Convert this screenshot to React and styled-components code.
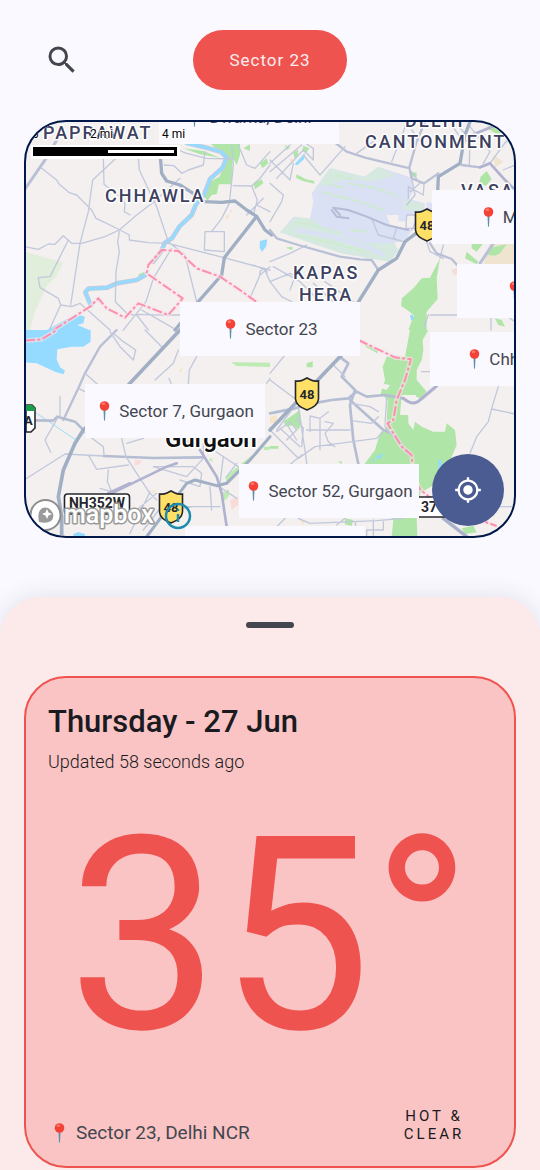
import React from "react";
import styled, { createGlobalStyle } from "styled-components";

const color = {
  page: "#faf9ff",
  ink: "#1a1b21",
  muted: "#44464f",
  red: "#ef5350",
  card: "#fac4c4",
  sheet: "#fce9e9",
  navy: "#001849",
  indigo: "#4a5c92",
};

const GlobalStyle = createGlobalStyle`
  *, *::before, *::after { box-sizing: border-box; }
  body { margin: 0; background: ${color.page}; font-family: Roboto, "Liberation Sans", sans-serif; color: ${color.ink}; }
  button { font: inherit; border: 0; cursor: pointer; }
`;

const Screen = styled.main`
  display: flex;
  flex-direction: column;
`;

const Header = styled.header`
  display: grid;
  grid-template-columns: 1fr auto 1fr;
  align-items: center;
  padding: 30px 44px;
`;

const IconButton = styled.button`
  display: flex;
  justify-self: start;
  padding: 0;
  background: none;
  color: ${color.muted};
`;

const PlaceChip = styled.button`
  height: 60px;
  padding: 0 36px;
  border-radius: 30px;
  background: ${color.red};
  color: #fdeeee;
  font-size: 17px;
  letter-spacing: 1px;
`;

const MapFrame = styled.section`
  position: relative;
  height: 418px;
  margin: 0 24px;
  border: 2px solid ${color.navy};
  border-radius: 42px;
  overflow: hidden;
  background: #f3f0ef;
`;

const MapDrawing = styled.svg`
  display: block;
  width: 100%;
  height: 100%;
  font-family: Roboto, "Liberation Sans", sans-serif;
`;

const PlacePin = styled.button`
  position: absolute;
  left: ${(p) => p.$x}px;
  top: ${(p) => p.$y}px;
  display: flex;
  align-items: center;
  justify-content: center;
  gap: 8px;
  width: 180px;
  height: 54px;
  padding: 0 0 0 2px;
  background: ${color.page};
  color: ${color.muted};
  font-size: 17px;
  white-space: nowrap;
`;

const PinName = styled.span`
  min-width: 60px;
  text-align: left;
`;

const MapOverlay = styled(MapDrawing)`
  position: absolute;
  inset: 0;
  pointer-events: none;
`;

const LocateButton = styled.button`
  position: absolute;
  right: 10px;
  bottom: 10px;
  display: flex;
  align-items: center;
  justify-content: center;
  width: 72px;
  height: 72px;
  border-radius: 50%;
  background: ${color.indigo};
  color: #fff;
`;

const Sheet = styled.section`
  display: flex;
  flex-direction: column;
  align-items: stretch;
  margin-top: 59px;
  padding: 25px 24px 2px;
  border-radius: 40px 40px 0 0;
  background: ${color.sheet};
  box-shadow: 0 0 24px rgba(40, 50, 90, 0.12);
`;

const Handle = styled.div`
  align-self: center;
  width: 48px;
  height: 6px;
  margin-bottom: 48px;
  border-radius: 3px;
  background: ${color.muted};
`;

const WeatherCard = styled.article`
  display: flex;
  flex-direction: column;
  min-height: 492px;
  padding: 24px 22px;
  border: 2px solid ${color.red};
  border-radius: 42px;
  background: ${color.card};
`;

const DateTitle = styled.h1`
  margin: 0;
  font-size: 31px;
  line-height: 40px;
  font-weight: 500;
`;

const Updated = styled.p`
  margin: 8px 0 0;
  font-size: 18px;
  line-height: 24px;
  font-weight: 300;
`;

const Temperature = styled.p`
  margin: 16px 0 0;
  font-size: 270px;
  line-height: 292px;
  text-align: center;
  color: ${color.red};
`;

const CardFooter = styled.footer`
  display: flex;
  justify-content: space-between;
  align-items: flex-end;
  margin: auto 0 -1px;
`;

const Location = styled.p`
  display: flex;
  align-items: center;
  gap: 10px;
  margin: 0;
  padding-left: 5px;
  font-size: 19px;
  line-height: 20px;
  color: ${color.muted};
`;

const Condition = styled.p`
  width: 116px;
  margin: 0;
  font-size: 15px;
  line-height: 18px;
  letter-spacing: 3px;
  text-align: center;
  text-transform: uppercase;
`;

function Pushpin() {
  return (
    <svg width="13" height="20" viewBox="0 0 13 20" aria-hidden="true">
      <path d="M5.5 9h2L7 19.2l-.5.8-.5-.8z" fill="#5f8fa8" />
      <circle cx="6.5" cy="5" r="4.8" fill="#f44336" />
      <ellipse cx="5.4" cy="2.8" rx="1.8" ry="1.2" fill="#ff7d6b" />
    </svg>
  );
}

const Lines = ({ d, w = 4, c = "#c2c8dc" }) => (
  <path d={d} fill="none" stroke={c} strokeWidth={w} strokeLinejoin="round" strokeLinecap="round" />
);
const Border = ({ d }) => (
  <>
    <path d={d} fill="none" stroke="#fbe4ea" strokeOpacity=".6" strokeWidth="14" strokeLinejoin="round" />
    <path d={d} fill="none" stroke="#fb8fae" strokeWidth="6" strokeDasharray="30 7 9 7" strokeLinejoin="round" />
  </>
);
const MAJOR = "#a1afc5";
const PURPLE = "#b0b2cf";
const PARK = "#b0e5a8";
const WATER = "#94dbff";

function NorthWest() {
  return (
    <g transform="translate(20 115) scale(0.33333)">
      <path d="M15 410L130 443 108 485 80 512 45 590 30 645H15z" fill="#e0eedb" />
      <path d="M570 85H660V120L650 150 638 128 635 208H597L590 238 575 240 562 258 553 242 570 200 598 185 622 130zM355 478l20-8v18l-18 2zM720 145l20-15 5 15-18 15zM700 205l25-12 5 12-25 18zM670 100l20-12v20zM490 100l60 8 50 20-60-10z" fill={PARK} />
      <path d="M80 645L140 612 180 600 195 605 190 625 172 630 208 645zM720 378l22-5-3 20-13 18-7-13z" fill={WATER} />
      <Lines d="M500 84L560 98 602 110 620 128 608 158 570 192 552 240 528 268 515 300 478 335 456 370 435 383 424 408 400 440M376 480L350 495 290 505 262 518 205 521 196 532 213 572" w={14} c="#c3cadc" />
      <Lines d="M500 84L560 98 602 110 620 128 608 158 570 192 552 240 528 268 515 300 478 335 456 370 435 383 424 408M376 480L350 495 290 505 262 518 205 521 196 532 213 572" w={9} c={WATER} />
      <Lines d="M15 222L82 125 130 40" w={9} c="#b9c0d6" />
      <Lines d="M65 160L110 195 118 208 148 233 170 240 215 285 228 310 260 325 300 345 328 360V375L385 383 445 385M15 395L55 403 85 387 105 388 130 362 155 385 185 385 255 365 298 345 350 300 405 258 480 190M320 100L218 195 205 290 180 385 152 570M250 130L252 208 300 245 315 265 313 290 330 300M145 375L90 485 55 488 60 518 115 550 122 570 155 575 180 565 270 645M122 570L90 640M298 350L293 380 298 410 288 470 286 560 320 595 340 600M355 130L358 165 410 275 445 380 495 420 530 560M445 385L600 425 750 465M555 350H613V410L553 405zM575 350L605 310 628 265 640 150 635 90M455 400L400 490 378 560 330 620 310 645M350 600L385 645M365 585L430 622 470 645M345 598L430 600H480M432 150L462 152 485 175 505 165 550 150 555 110M460 100L500 115 560 130 640 132M655 90L680 150 705 160 750 110M640 212L695 213 720 190 750 150M695 213L712 255 700 300M710 270L750 290M680 300L730 250M690 550L720 480 750 455M700 450L735 465 750 500M720 480C715 460 745 455 740 478" />
      <Lines d="M420 110L425 175 440 198 480 210 515 232 552 260 605 262 645 258 680 285 710 304 735 345 755 360M710 304L613 428 605 480 535 560 465 645" w={10} c={MAJOR} />
      <path d="M618 302l8-5v10l-8 8zM630 285h8l-5 8z" fill="#f4e2c4" />
      <Border d="M100 645L210 575 235 550 260 580 315 608 355 565 445 600 488 550 380 475 385 450 425 405 475 408 530 460 600 485 660 525 750 590" />
    </g>
  );
}

function NorthEast() {
  return (
    <g transform="translate(270 115) scale(0.33333)">
      <path d="M660 385H750V450H640zM640 40l90-20v60zM670 120l30 20-25 18z" fill="#efe4d0" />
      <path d="M180 160L285 185 325 155 425 188 430 225 418 252 465 265 462 290 412 300 405 320 385 318V300H350L360 330 425 345 410 370 372 385 385 405 360 440 300 430 215 415 170 400 30 352 70 305 120 312 130 260 125 235 150 200z" fill="#dae1f5" />
      <path d="M180 160L285 185 325 155 375 180 350 190 300 200 245 192 160 210 140 230 150 200zM75 305L130 312 165 345 290 385 370 385 385 405 360 440 300 430 215 415 170 400 30 352zM405 252l58 15-5 22-60-5z" fill="#d6e9e1" />
      <path d="M80 345L190 365 290 395 340 420M180 225L390 275" fill="none" stroke="#dae1f5" strokeWidth="14" />
      <path d="M170 205L225 220M160 232L225 250M235 205L320 220 385 245M210 245L275 262 340 285M195 180L260 195M75 322L130 330 215 355M80 360L190 385 290 412M240 345L290 350" fill="none" stroke="#cdebcd" strokeWidth="6" strokeDasharray="24 6" />
      <path d="M510 430L500 490 503 552 470 590V645H415L432 600 393 572 396 550 430 520 455 490 480 488zM80 178l28 15 25 5v8l-35-8-20-10zM45 90l15 8-10 8zM70 112l15-7-2 20-10 5zM100 92l18 8-10 15-12-8zM650 168l15 25-18 20-20-10 5-18zM420 170l20 3v12h-18zM655 400L710 388 690 415 675 422 655 420zM605 385h35l-20 25-15-10zM590 410l35 30-5 8-35-18zM675 610l20 5 10 20-20-5zM650 35l30-10 20 20-10 20-20-15zM47 398l20-3v10z" fill={PARK} />
      <path d="M90 130l15-15-3 18-20 18-8-3zM420 602l8-5 4 15-8 5z" fill={WATER} />
      <path d="M545 465l20-8 5 15-18 10zM60 130l12 5-8 10z" fill="#f8dcd9" />
      <path d="M470 260l18 5v80h-18z" fill="#dcdff5" />
      <Lines d="M185 75L230 110 285 128 410 158 418 158M465 20L440 80 418 158 425 190 462 205 505 175M575 150L630 157 660 145" w={7} c="#b9c0d6" />
      <Lines d="M0 145L60 90M0 170L95 90M20 190L100 105 130 135V100L110 87M100 120L150 180 225 95M365 140L400 50 410 20M260 115L310 80M0 205L40 240 35 260 0 320M0 135L60 195 70 145M462 205L460 240 415 215V250M425 190L435 240 410 270M440 315L425 345M380 340L370 370 400 380M420 165L450 205 420 230M410 300H437V340H408zM425 45L455 85M570 40L600 70 598 150M545 30L580 80 630 65M600 35L660 110 640 145M660 145L700 90 735 50M700 165L735 150M0 500L60 475 75 485 60 525M0 500L35 545 65 560M10 455L90 500 150 560M130 505L190 560M0 440L60 415 110 390M480 600H580M663 605V645M470 380L480 410 520 430M460 640L475 600M510 430L520 390M305 310L325 360 400 380M165 500L250 560M720 610L750 630" />
      <Lines d="M190 278L235 285 290 305 350 330 415 345M185 285L200 305 235 310M190 278L210 300" w={6} c="#b6bad5" />
      <Lines d="M0 345L20 370 85 390 210 425 270 433 305 435 325 465" w={7} c="#b9c0d6" />
      <Lines d="M630 445L670 385" w={9} c="#b9c0d8" />
      <Lines d="M480 385L500 415 545 432 570 460" w={7} c="#b9c0d6" />
      <Lines d="M250 585L325 465 380 430 405 380 445 350 500 300 505 185 570 145 585 60 600 20" w={10} c={MAJOR} />
      <Lines d="M605 60L680 30M630 157L660 145 705 195 730 220" w={8} c={PURPLE} />
    </g>
  );
}

function SouthWest() {
  return (
    <g transform="translate(20 330) scale(0.33333)">
      <path d="M15 0H212V35L190 50 155 50 112 58 110 88 120 112 135 122 130 133 105 125 50 100 15 97zM160 612l15-6 20 6v10h-35z" fill={WATER} />
      <path d="M632 97L750 98V111L650 108zM730 350h20v10h-18zM605 490l22-12v20l-20 20zM615 440L690 380 710 365 680 400 620 455zM565 388l12-3v12z" fill="#bdebb3" />
      <path d="M345 390h20l-5 12-18 5zM630 510l25-10v25l-20 15z" fill="#f8dcd9" />
      <path d="M478 120l10-8-5 18zM395 480l12 2-5 10z" fill="#f5e6bd" />
      <Lines d="M50 250L168 330" w={3} c="#9bdcf7" />
      <Lines d="M290 0L240 50 195 130 175 175 130 270" w={7} c="#b9c0d6" />
      <Lines d="M45 271L100 272 112 260 165 275 190 300M250 378L400 384 550 382" w={8} c="#b5bdd3" />
      <Lines d="M195 130L235 165M175 175L195 185M120 200V260M112 265L75 330 92 367M190 305L250 350 252 375M15 448L135 372 250 378M205 375L230 418 325 405M265 420L262 455 275 485 240 475M305 325L318 380M320 340L370 325M318 380L350 430 390 490 410 510M270 5L300 50 340 90 347 60 310 35 280 10M375 0L425 50M405 150L460 100 475 60M505 160L508 120 530 80M447 145L455 165M740 160L750 145M390 485L330 610M410 490L350 540M440 510L370 600M400 410L520 410 545 430 540 470 480 450M460 540L520 530M550 385L500 440 400 410M570 470L575 540M590 465L650 505M600 530H500M610 380L600 460M550 370V340M580 360L700 440M540 350L470 320M620 440L650 400" />
      <Lines d="M265 490L330 460M275 490L440 410 470 400M540 360L590 440 605 490 620 590" w={8} c={PURPLE} />
      <Lines d="M480 0L325 165 190 300 165 340 130 420 115 500 125 560V620" w={11} c={MAJOR} />
      <Lines d="M380 620L500 460 525 450 590 467 620 460 690 390 750 320" w={9} c={MAJOR} />
      <Border d="M15 32L65 28 110 0" />
    </g>
  );
}

function SouthEast() {
  return (
    <g transform="translate(270 330) scale(0.33333)">
      <path d="M420 0H475L458 30 460 60 455 90 440 120V150L470 185 450 205 425 195 395 195 390 255H415V280L430 300 435 275 455 290 490 305 525 305 530 280 555 300 560 345 545 380 550 420 500 460 450 490V540L440 560 442 620H365L370 570 330 540 310 480 285 400 315 360 330 310 350 290 353 210 332 190 345 150 338 110 350 80 405 80zM110 100l18-6v18h-18zM0 348h25v8H0zM90 240l5 40-10 20-15-15-20 5-10-15zM205 395l10-2v10zM225 565l25 5-5 18-20-5zM285 40l40 20-3 10-35-20zM575 595l35-8 10 20-35 5z" fill={PARK} />
      <path d="M330 160l30 5-10 15-15-5zM405 195h33v15l-20 10z" fill="#f3f0ef" />
      <path d="M305 390l10-5-5 12zM320 378l20-8-8 15-12 3zM505 390l10 0v15l-10 15z" fill={WATER} />
      <path d="M0 260l20-5v25H0zM90 570l15 3-5 12z" fill="#f6e3c8" />
      <Lines d="M0 250L75 235 130 220 185 210 235 205 260 185 290 200 345 195 400 205M215 85L235 100 215 140 255 180 240 225 250 330 265 402M240 210L340 300 365 310" w={8} c="#b5bdd3" />
      <Lines d="M0 130L45 75M0 150L100 225M85 235L105 360 110 400M0 300L85 385 135 350 320 325 345 300M95 375L40 420M110 300H240M120 260V305M120 258L150 265V360M150 265L175 245M165 275L190 280 165 310 175 335 195 350M245 220L300 230 325 245M245 272L305 280 325 260M65 240L20 300M80 265L100 295 95 350M30 295L90 350M55 290L80 330M20 305L60 275 80 300 50 330M185 100L225 140M350 200L345 290 360 310M455 125H480M685 170L665 235 655 275 620 320 600 370M665 237L750 255M730 530H690M85 565L120 580 320 572 400 565M200 585L225 565M255 575L260 600M310 570V620M340 575V600H290V620M20 590L50 560" />
      <Lines d="M400 205Q430 230 450 210L500 168" w={9} c={PURPLE} />
      <Lines d="M365 310L420 375" w={8} c="#b9bfd0" />
      <Lines d="M520 565L590 620" w={10} c="#a9b1ca" />
      <Lines d="M0 300L215 75" w={11} c={MAJOR} />
      <Border d="M265 30L375 82 423 88 405 150 380 210 370 270 352 280 395 350 425 375 430 440 450 478 500 520 600 560 680 588" />
    </g>
  );
}

const Shield = ({ x, y }) => (
  <g transform={`translate(${x} ${y})`}>
    <path d="M-11.500-14Q-7-13.500-4-15L0-17 4-15Q7-13.500 11.500-14V4Q11 11 0 15-11 11-11.500 4z" fill="#ffe067" stroke="#26272c" strokeWidth="1.6" />
    <text y="4" textAnchor="middle" fontSize="13" fontWeight="700" fill="#26272c">48</text>
  </g>
);

const halo = { stroke: "#fff", strokeWidth: 3, strokeLinejoin: "round", paintOrder: "stroke" };
const District = ({ x, y, children }) => (
  <text x={x} y={y} fontSize="18" fontWeight="500" letterSpacing="2" fill="#3d4160" {...halo}>{children}</text>
);

function BaseMap() {
  return (
    <MapDrawing viewBox="26 122 488 414" preserveAspectRatio="xMinYMin slice" role="img" aria-label="Map of Gurgaon">
      <NorthWest />
      <NorthEast />
      <SouthWest />
      <SouthEast />
      <District x="43" y="139">PAPRAWAT</District>
      <District x="105" y="202">CHHAWLA</District>
      <District x="405" y="127">DELHI</District>
      <District x="365" y="148">CANTONMENT</District>
      <District x="461" y="197">VASA</District>
      <District x="293" y="279">KAPAS</District>
      <District x="299" y="301">HERA</District>
      <text x="165" y="447" fontSize="24" fontWeight="600" fill="#111" {...halo}>Gurgaon</text>
      <Shield x="427" y="226" />
      <Shield x="307" y="395" />
      <Shield x="171" y="508" />
      <path d="M26 405h6l3 3v20l-4 4h-5z" fill="#fff" stroke="#26272c" strokeWidth="1.6" />
      <path d="M26 405h6l3 3v3h-9z" fill="#1d9e4c" />
      <text x="24" y="425" fontSize="13" fontWeight="700" fill="#26272c">A</text>
      <rect x="64.500" y="494" width="65" height="20" rx="3" fill="#fff" stroke="#26272c" strokeWidth="1.6" />
      <text x="97" y="508" textAnchor="middle" fontSize="14" fontWeight="700" fill="#26272c">NH352W</text>
      <rect x="400" y="497" width="50" height="20" rx="3" fill="#fff" stroke="#26272c" strokeWidth="1.6" />
      <text x="413" y="512" fontSize="14" fontWeight="700" fill="#26272c">137</text>
    </MapDrawing>
  );
}

function MapFurniture() {
  return (
    <MapOverlay viewBox="26 122 488 414" preserveAspectRatio="xMinYMin slice" aria-hidden="true">
      <g fontSize="12" fill="#000" {...halo} strokeWidth="2">
        <text x="32" y="138">0</text>
        <text x="90" y="138">2 mi</text>
        <text x="162" y="138">4 mi</text>
      </g>
      <path d="M31 145h149v14H31z" fill="#fff" />
      <path d="M33 147h144v9H33z" />
      <path d="M108 150h66v3h-66z" fill="#fff" />
      <circle cx="45.500" cy="515" r="15" fill="#fff" stroke="#8e8e8e" strokeWidth="2" />
      <path d="M39 522Q37 513 41 509A8 8 0 0 1 52 520Q48 524 39 522z" fill="#9a9a9a" />
      <path d="M47 509l1.500 3.500L52 514l-3.500 1.500L47 519l-1.500-3.500L42 514l3.500-1.500z" fill="#fff" />
      <text x="64" y="523" fontSize="25" fontWeight="500" fill="#fff" stroke="#9a9a9a" strokeWidth="3" strokeLinejoin="round" paintOrder="stroke">mapbox</text>
      <circle cx="178" cy="516" r="12" fill="none" stroke="#1d8bad" strokeWidth="2.500" />
      <path d="M178 514v8M178 509v2" stroke="#1d8bad" strokeWidth="2.500" />
    </MapOverlay>
  );
}

const places = [
  { name: "Dwarka, Delhi", x: 133, y: -32 },
  { name: "Munirka", x: 406, y: 68 },
  { name: "", x: 431, y: 142 },
  { name: "Chhatarpur", x: 404, y: 210 },
  { name: "Sector 23", x: 154, y: 180 },
  { name: "Sector 7, Gurgaon", x: 59, y: 262 },
  { name: "Sector 52, Gurgaon", x: 213, y: 342 },
  { name: "", x: 159, y: 404 },
];

export default function App() {
  return (
    <Screen>
      <GlobalStyle />
      <Header>
        <IconButton aria-label="Search">
          <svg width="36" height="36" viewBox="0 0 24 24" fill="currentColor">
            <path d="M15.500 14h-.79l-.28-.27A6.470 6.470 0 0 0 16 9.500 6.500 6.500 0 1 0 9.500 16c1.610 0 3.090-.59 4.230-1.570l.27.280v.79l5 4.990L20.490 19l-4.990-5zm-6 0C7.010 14 5 11.990 5 9.500S7.010 5 9.500 5 14 7.010 14 9.500 11.990 14 9.500 14z" />
          </svg>
        </IconButton>
        <PlaceChip>Sector 23</PlaceChip>
      </Header>
      <MapFrame>
        <BaseMap />
        {places.map((p) => (
          <PlacePin key={`${p.x}-${p.y}`} $x={p.x} $y={p.y} aria-label={p.name || "Place"}>
            <Pushpin />
            <PinName>{p.name}</PinName>
          </PlacePin>
        ))}
        <MapFurniture />
        <LocateButton aria-label="Show my location">
          <svg width="28" height="28" viewBox="0 0 24 24" fill="currentColor">
            <path d="M12 8c-2.210 0-4 1.790-4 4s1.790 4 4 4 4-1.790 4-4-1.790-4-4-4zm8.940 3A8.994 8.994 0 0 0 13 3.060V1h-2v2.060A8.994 8.994 0 0 0 3.060 11H1v2h2.060A8.994 8.994 0 0 0 11 20.940V23h2v-2.060A8.994 8.994 0 0 0 20.940 13H23v-2h-2.060zM12 19c-3.870 0-7-3.130-7-7s3.130-7 7-7 7 3.130 7 7-3.130 7-7 7z" />
          </svg>
        </LocateButton>
      </MapFrame>
      <Sheet>
        <Handle />
        <WeatherCard>
          <DateTitle>Thursday - 27 Jun</DateTitle>
          <Updated>Updated 58 seconds ago</Updated>
          <Temperature>35°</Temperature>
          <CardFooter>
            <Location>
              <Pushpin />
              <span>Sector 23, Delhi NCR</span>
            </Location>
            <Condition>Hot &amp; Clear</Condition>
          </CardFooter>
        </WeatherCard>
      </Sheet>
    </Screen>
  );
}
